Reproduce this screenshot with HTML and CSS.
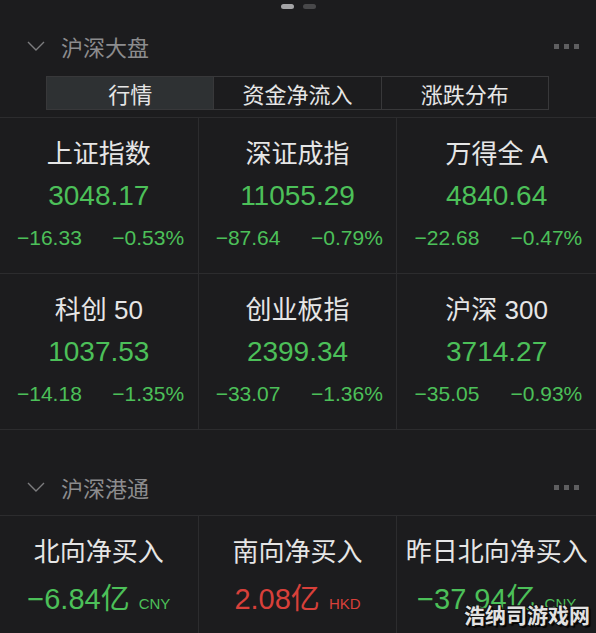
FILE: index.html
```html
<!DOCTYPE html>
<html lang="zh-CN">
<head>
<meta charset="UTF-8">
<meta name="viewport" content="width=device-width, initial-scale=1.0">
<title>沪深大盘</title>
<link rel="stylesheet" href="styles.css">
</head>
<body>
<div class="pager">
    <span class="pager-dot active"></span>
    <span class="pager-dot"></span>
</div>

<section class="panel">
    <div class="panel-head">
        <svg class="chevron" width="18" height="10" viewBox="0 0 18 10"><polyline points="1,1 9,9 17,1"/></svg>
        <span class="panel-title">沪深大盘</span>
        <span class="more"><i></i><i></i><i></i></span>
    </div>
    <div class="tabs">
        <div class="tab active">行情</div>
        <div class="tab">资金净流入</div>
        <div class="tab">涨跌分布</div>
    </div>
    <div class="quotes">
        <div class="quote">
            <div class="quote-name">上证指数</div>
            <div class="quote-value down">3048.17</div>
            <div class="quote-change down"><span>−16.33</span><span>−0.53%</span></div>
        </div>
        <div class="quote">
            <div class="quote-name">深证成指</div>
            <div class="quote-value down">11055.29</div>
            <div class="quote-change down"><span>−87.64</span><span>−0.79%</span></div>
        </div>
        <div class="quote">
            <div class="quote-name">万得全 A</div>
            <div class="quote-value down">4840.64</div>
            <div class="quote-change down"><span>−22.68</span><span>−0.47%</span></div>
        </div>
        <div class="quote">
            <div class="quote-name">科创 50</div>
            <div class="quote-value down">1037.53</div>
            <div class="quote-change down"><span>−14.18</span><span>−1.35%</span></div>
        </div>
        <div class="quote">
            <div class="quote-name">创业板指</div>
            <div class="quote-value down">2399.34</div>
            <div class="quote-change down"><span>−33.07</span><span>−1.36%</span></div>
        </div>
        <div class="quote">
            <div class="quote-name">沪深 300</div>
            <div class="quote-value down">3714.27</div>
            <div class="quote-change down"><span>−35.05</span><span>−0.93%</span></div>
        </div>
    </div>
</section>

<section class="panel panel-hk">
    <div class="panel-head">
        <svg class="chevron" width="18" height="10" viewBox="0 0 18 10"><polyline points="1,1 9,9 17,1"/></svg>
        <span class="panel-title">沪深港通</span>
        <span class="more"><i></i><i></i><i></i></span>
    </div>
    <div class="quotes">
        <div class="quote">
            <div class="quote-name">北向净买入</div>
            <div class="flow-value down">−6.84亿<small>CNY</small></div>
        </div>
        <div class="quote">
            <div class="quote-name">南向净买入</div>
            <div class="flow-value up">2.08亿<small>HKD</small></div>
        </div>
        <div class="quote">
            <div class="quote-name">昨日北向净买入</div>
            <div class="flow-value down">−37.94亿<small>CNY</small></div>
        </div>
    </div>
</section>

<div class="watermark">浩纳司游戏网</div>
</body>
</html>
```

FILE: styles.css
```css
body {
    margin: 0;
    width: 596px;
    height: 633px;
    overflow: hidden;
    position: relative;
    background-color: #1c1c1e;
    color: #e6e6e6;
    font-family: "Liberation Sans", "Noto Sans CJK SC", sans-serif;
}

.pager {
    display: flex;
    justify-content: center;
    gap: 9px;
    padding-top: 4px;
    height: 10px;
}

.pager-dot {
    width: 13px;
    height: 5px;
    border-radius: 3px;
    background-color: #48484a;
}

.pager-dot.active {
    background-color: #a4a4a6;
}

.panel-head {
    display: flex;
    align-items: center;
    height: 36px;
    margin-top: 14px;
    padding: 0 17px 0 27px;
}

.panel-hk .panel-head {
    margin-top: 39px;
}

.chevron {
    fill: none;
    stroke: #7c7c7e;
    stroke-width: 1.4;
    margin-right: 16px;
}

.panel-title {
    flex: 1;
    font-size: 22px;
    color: #8c8c8e;
}

.more {
    display: flex;
    gap: 5px;
}

.more i {
    width: 5px;
    height: 5px;
    background-color: #5e5e60;
}

.tabs {
    display: flex;
    height: 34px;
    margin: 12px 47px 0 46px;
    border: 1px solid #38383a;
    box-sizing: border-box;
}

.tab {
    flex: 1;
    display: flex;
    align-items: center;
    justify-content: center;
    font-size: 22px;
    color: #e6e6e6;
    border-left: 1px solid #38383a;
}

.tab:first-child {
    border-left: none;
}

.tab.active {
    background-color: #2e3133;
}

.quotes {
    display: grid;
    grid-template-columns: repeat(3, 1fr);
    margin-top: 7px;
    border-top: 1px solid #2c2c2e;
}

.panel-hk .quotes {
    margin-top: 10px;
}

.quote {
    display: flex;
    flex-direction: column;
    align-items: center;
    height: 156px;
    padding-top: 19px;
    box-sizing: border-box;
    border-right: 1px solid #2c2c2e;
    border-bottom: 1px solid #2c2c2e;
}

.quote:nth-child(3n) {
    border-right: none;
}

.quote-name {
    font-size: 26px;
    line-height: 34px;
    color: #e6e6e6;
    white-space: nowrap;
}

.quote-value {
    margin-top: 5px;
    font-size: 28px;
    line-height: 40px;
}

.quote-change {
    display: flex;
    width: 100%;
    margin-top: 8px;
    font-size: 21px;
    line-height: 28px;
}

.quote-change span {
    flex: 1;
    text-align: center;
}

.flow-value {
    margin-top: 10px;
    font-size: 29px;
    line-height: 40px;
    white-space: nowrap;
}

.flow-value small {
    margin-left: 9px;
    font-size: 15px;
}

.down {
    color: #4cc059;
}

.up {
    color: #d8403a;
}

.watermark {
    position: absolute;
    left: 464px;
    top: 601px;
    font-family: "Noto Sans CJK SC", sans-serif;
    font-size: 21px;
    font-weight: bold;
    line-height: 26px;
    color: #e2e2e2;
    text-shadow: 1px 1px 0 #111, -1px -1px 0 #111, 1px -1px 0 #111, -1px 1px 0 #111, 2px 2px 1px #000;
}
```
